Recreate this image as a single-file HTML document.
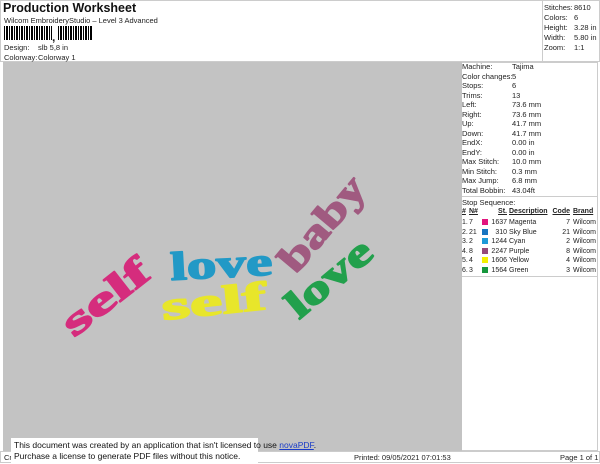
<!DOCTYPE html>
<html><head><meta charset="utf-8"><style>
*{margin:0;padding:0;box-sizing:border-box}
body{width:600px;height:464px;background:#fff;position:relative;overflow:hidden;font-family:"Liberation Sans",sans-serif;font-size:7.5px;color:#222}
.a{position:absolute;white-space:nowrap}
.bc{position:absolute;top:26px;left:4px;height:14px;width:90px;background:repeating-linear-gradient(90deg,#000 0 1px,#fff 1px 2px,#000 2px 4px,#fff 4px 5px)}
.r{position:absolute;font-size:7px;white-space:nowrap}
.sw{position:absolute;width:6px;height:6px}
</style></head><body>
<div class="a" style="left:0;top:0;width:600px;height:62px;border:1px solid #ccc"></div>
<div class="a" style="left:3px;top:1px;font-size:12.5px;font-weight:bold;color:#111">Production Worksheet</div>
<div class="a" style="left:4px;top:16px">Wilcom EmbroideryStudio – Level 3 Advanced</div>
<div class="bc" style="width:48px"></div>
<div class="a" style="left:52px;top:30px;font-size:12px;font-weight:bold">,</div>
<div class="bc" style="left:58px;width:34px"></div>
<div class="a" style="left:4px;top:43px">Design:</div><div class="a" style="left:38px;top:43px">slb 5,8 in</div>
<div class="a" style="left:4px;top:53px">Colorway:</div><div class="a" style="left:38px;top:53px">Colorway 1</div>
<div class="a" style="left:542px;top:0;width:58px;height:62px;border-left:1px solid #ccc"></div>
<div class="a" style="left:544px;top:3px;line-height:10px">Stitches:<br>Colors:<br>Height:<br>Width:<br>Zoom:</div>
<div class="a" style="left:574px;top:3px;line-height:10px">8610<br>6<br>3.28 in<br>5.80 in<br>1:1</div>
<div class="a" style="left:3px;top:62px;width:455px;height:389px;background:#c3c3c3"></div>
<div class="a" style="left:458px;top:62px;width:140px;height:389px;border:1px solid #ccc;background:#fff"></div>
<div class="a" style="left:458px;top:62px;width:4px;height:389px;background:#c3c3c3"></div>
<div class="a" style="left:462px;top:62px;line-height:9.5px">Machine:<br>Color changes:<br>Stops:<br>Trims:<br>Left:<br>Right:<br>Up:<br>Down:<br>EndX:<br>EndY:<br>Max Stitch:<br>Min Stitch:<br>Max Jump:<br>Total Bobbin:</div>
<div class="a" style="left:512px;top:62px;line-height:9.5px">Tajima<br>5<br>6<br>13<br>73.6 mm<br>73.6 mm<br>41.7 mm<br>41.7 mm<br>0.00 in<br>0.00 in<br>10.0 mm<br>0.3 mm<br>6.8 mm<br>43.04ft</div>
<div class="a" style="left:462px;top:196px;width:136px;border-top:1px solid #ccc"></div>
<div class="a" style="left:462px;top:198px">Stop Sequence:</div>
<div class="r" style="left:462px;top:208px;font-weight:bold;text-decoration:underline">#</div>
<div class="r" style="left:469px;top:208px;font-weight:bold;text-decoration:underline">N#</div>
<div class="r" style="left:494px;width:13px;text-align:right;top:208px;font-weight:bold;text-decoration:underline">St.</div>
<div class="r" style="left:509px;top:208px;font-weight:bold;text-decoration:underline">Description</div>
<div class="r" style="left:552px;width:18px;text-align:right;top:208px;font-weight:bold;text-decoration:underline">Code</div>
<div class="r" style="left:573px;top:208px;font-weight:bold;text-decoration:underline">Brand</div>
<div class="a" style="left:0;top:218px">
<div class="r" style="left:462px;top:0;line-height:9.6px">1.<br>2.<br>3.<br>4.<br>5.<br>6.</div>
<div class="r" style="left:469px;top:0;line-height:9.6px">7<br>21<br>2<br>8<br>4<br>3</div>
<div class="sw" style="left:482px;top:1px;background:#e2157e"></div>
<div class="sw" style="left:482px;top:10.6px;background:#1874c0"></div>
<div class="sw" style="left:482px;top:20.2px;background:#1e9ad8"></div>
<div class="sw" style="left:482px;top:29.8px;background:#954a7a"></div>
<div class="sw" style="left:482px;top:39.4px;background:#f4f000"></div>
<div class="sw" style="left:482px;top:49px;background:#16973c"></div>
<div class="r" style="left:487px;width:20px;text-align:right;top:0;line-height:9.6px">1637<br>310<br>1244<br>2247<br>1606<br>1564</div>
<div class="r" style="left:509px;top:0;line-height:9.6px">Magenta<br>Sky Blue<br>Cyan<br>Purple<br>Yellow<br>Green</div>
<div class="r" style="left:552px;width:18px;text-align:right;top:0;line-height:9.6px">7<br>21<br>2<br>8<br>4<br>3</div>
<div class="r" style="left:573px;top:0;line-height:9.6px">Wilcom<br>Wilcom<br>Wilcom<br>Wilcom<br>Wilcom<br>Wilcom</div>
</div>
<div class="a" style="left:462px;top:276px;width:136px;border-top:1px solid #ccc"></div>
<svg class="a" style="left:0;top:0" width="600" height="464">
<g font-family="Liberation Serif,serif" font-weight="bold" font-size="40" stroke-width="1.5" stroke-linejoin="round">
<text x="0" y="0" fill="#d52c7d" stroke="#d52c7d" textLength="100" lengthAdjust="spacingAndGlyphs" transform="translate(74,338) rotate(-38)">self</text>
<text x="0" y="0" fill="#2299c6" stroke="#2299c6" textLength="102" lengthAdjust="spacingAndGlyphs" transform="translate(171,280) rotate(-3)">love</text>
<text x="0" y="0" fill="#a05a80" stroke="#a05a80" textLength="112" lengthAdjust="spacingAndGlyphs" transform="translate(296,275) rotate(-50)">baby</text>
<text x="0" y="0" fill="#e8e62a" stroke="#e8e62a" textLength="105" lengthAdjust="spacingAndGlyphs" transform="translate(163,320) rotate(-6)">self</text>
<text x="0" y="0" fill="#22a04c" stroke="#22a04c" textLength="100" lengthAdjust="spacingAndGlyphs" transform="translate(299,320) rotate(-40)">love</text>
</g></svg>
<div class="a" style="left:0;top:451px;width:600px;height:12px;border:1px solid #ccc"></div>
<div class="a" style="left:4px;top:453px">Cr</div>
<div class="a" style="left:354px;top:453px">Printed: 09/05/2021 07:01:53</div>
<div class="a" style="left:560px;top:453px">Page 1 of 1</div>
<div class="a" style="left:11px;top:438px;width:247px;height:26px;background:#fff"></div>
<div class="a" style="left:14px;top:440px;font-size:8.5px;line-height:11px;color:#111">This document was created by an application that isn't licensed to use <span style="color:#1a3cc8;text-decoration:underline">novaPDF</span>.<br>Purchase a license to generate PDF files without this notice.</div>
</body></html>
